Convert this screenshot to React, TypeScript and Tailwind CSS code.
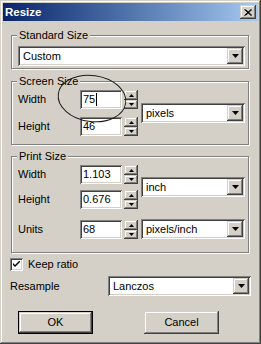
import type { ReactNode } from 'react';

const FIELD =
  'bg-white shadow-[inset_1px_1px_0_#808080,inset_-1px_-1px_0_#ffffff,inset_2px_2px_0_#404040,inset_-2px_-2px_0_#d4d0c8]';
const RAISED =
  'bg-[#d4d0c8] shadow-[inset_-1px_-1px_0_#404040,inset_1px_1px_0_#d4d0c8,inset_-2px_-2px_0_#808080,inset_2px_2px_0_#ffffff]';

const DownArrow = () => (
  <svg width="7" height="4" viewBox="0 0 7 4">
    <polygon points="0,0 7,0 3.5,4" fill="#000" />
  </svg>
);

interface ComboProps {
  value: string;
  className?: string;
}

const Combo = ({ value, className = '' }: ComboProps) => (
  <div className={`flex h-[20px] items-center p-[2px] ${FIELD} ${className}`}>
    <span className="flex-1 pl-[3px] leading-[13px]">{value}</span>
    <div className={`flex h-full w-[16px] items-center justify-center ${RAISED}`}>
      <DownArrow />
    </div>
  </div>
);

interface FieldProps {
  value: string;
  caret?: boolean;
}

const NumField = ({ value, caret }: FieldProps) => (
  <div className={`flex h-[19px] items-center px-[3px] ${FIELD}`}>
    <span className="leading-[13px]">{value}</span>
    {caret && <span className="ml-px h-[13px] w-px bg-black" />}
  </div>
);

const Spinner = () => (
  <div className="ml-[2px] flex h-[19px] w-[14px] flex-col">
    <div className={`flex h-[10px] items-center justify-center ${RAISED}`}>
      <svg width="5" height="3" viewBox="0 0 5 3">
        <polygon points="2.5,0 5,3 0,3" fill="#000" />
      </svg>
    </div>
    <div className={`flex h-[9px] items-center justify-center ${RAISED}`}>
      <svg width="5" height="3" viewBox="0 0 5 3">
        <polygon points="0,0 5,0 2.5,3" fill="#000" />
      </svg>
    </div>
  </div>
);

interface GroupProps {
  title: string;
  className?: string;
  children: ReactNode;
}

const Group = ({ title, className = '', children }: GroupProps) => (
  <div
    className={`relative ml-px w-[238px] border border-[#808080] shadow-[inset_1px_1px_0_#ffffff,1px_1px_0_#ffffff] ${className}`}
  >
    <span className="absolute -top-[7px] left-[5px] bg-[#d4d0c8] px-[2px] leading-[13px]">{title}</span>
    {children}
  </div>
);

const Label = ({ children }: { children: ReactNode }) => (
  <span className="self-center leading-[13px]">{children}</span>
);

export default function App() {
  return (
    <div
      className={`relative flex h-[344px] w-[261px] flex-col bg-[#d4d0c8] p-[3px] text-[11px] text-black shadow-[inset_-1px_-1px_0_#404040,inset_1px_1px_0_#d4d0c8,inset_-2px_-2px_0_#808080,inset_2px_2px_0_#ffffff] [font-family:'Liberation_Sans',Arial,sans-serif]`}
    >
      {/* title bar */}
      <div className="flex h-[18px] items-center bg-gradient-to-r from-[#0a246a] to-[#a6caf0] pl-[2px] pr-[2px]">
        <span className="flex-1 text-[11.5px] font-bold leading-[14px] text-white">Resize</span>
        <div className={`flex h-[14px] w-[16px] items-center justify-center ${RAISED}`}>
          <svg width="8" height="7" viewBox="0 0 8 7">
            <path d="M0.5 0.5 L7 6.5 M1.5 0.5 L8 6.5 M7 0.5 L0.5 6.5 M8 0.5 L1.5 6.5" stroke="#000" strokeWidth="1" />
          </svg>
        </div>
      </div>

      <div className="flex flex-1 flex-col pl-[7px] pr-[7px]">
        <Group title="Standard Size" className="mt-[14px] pb-[2px] pl-[6px] pt-[10px]">
          <Combo value="Custom" className="w-[227px]" />
        </Group>

        <Group title="Screen Size" className="mt-[12px]">
          <div className="grid grid-cols-[62px_42px_16px_106px] grid-rows-[19px_19px] gap-y-[8px] pb-[8px] pl-[6px] pt-[8px]">
            <Label>Width</Label>
            <NumField value="75" caret />
            <Spinner />
            <div className="row-span-2 self-center pl-[3px]">
              <Combo value="pixels" className="w-[104px]" />
            </div>
            <Label>Height</Label>
            <NumField value="46" />
            <Spinner />
          </div>
        </Group>

        <Group title="Print Size" className="mt-[11px]">
          <div className="grid grid-cols-[62px_42px_16px_106px] grid-rows-[19px_19px_24px] gap-y-[6px] pb-[13px] pl-[6px] pt-[8px]">
            <Label>Width</Label>
            <NumField value="1.103" />
            <Spinner />
            <div className="row-span-2 self-center pl-[3px]">
              <Combo value="inch" className="w-[104px]" />
            </div>
            <Label>Height</Label>
            <NumField value="0.676" />
            <Spinner />
            <div className="flex h-[19px] items-center self-end leading-[13px]">Units</div>
            <div className="self-end">
              <NumField value="68" />
            </div>
            <div className="self-end">
              <Spinner />
            </div>
            <div className="self-end pl-[3px]">
              <Combo value="pixels/inch" className="w-[104px]" />
            </div>
          </div>
        </Group>

        <div className="mt-[5px] flex items-center">
          <div className={`flex h-[13px] w-[13px] items-center justify-center ${FIELD}`}>
            <svg width="7" height="7" viewBox="0 0 7 7">
              <path d="M0 2 L0 4 L2 6 L7 1 L7 -1 L2 4 Z" fill="#000" />
            </svg>
          </div>
          <span className="ml-[5px] leading-[13px]">Keep ratio</span>
        </div>

        <div className="mt-[5px] flex items-center justify-between">
          <span className="leading-[13px]">Resample</span>
          <Combo value="Lanczos" className="w-[143px]" />
        </div>

        <div className="mt-[15px] flex pl-[8px]">
          <div className="h-[23px] w-[75px] border border-black">
            <div className={`flex h-full items-center justify-center leading-[13px] ${RAISED}`}>OK</div>
          </div>
          <div className={`ml-[51px] flex h-[23px] w-[75px] items-center justify-center leading-[13px] ${RAISED}`}>
            Cancel
          </div>
        </div>
      </div>

      {/* hand-drawn circle around the width field */}
      <svg className="pointer-events-none absolute left-0 top-0" width="261" height="344" viewBox="0 0 261 344">
        <ellipse cx="92" cy="98.5" rx="34" ry="23" transform="rotate(8 92 98.5)" fill="none" stroke="#1a1a1a" strokeWidth="1" />
      </svg>
    </div>
  );
}
